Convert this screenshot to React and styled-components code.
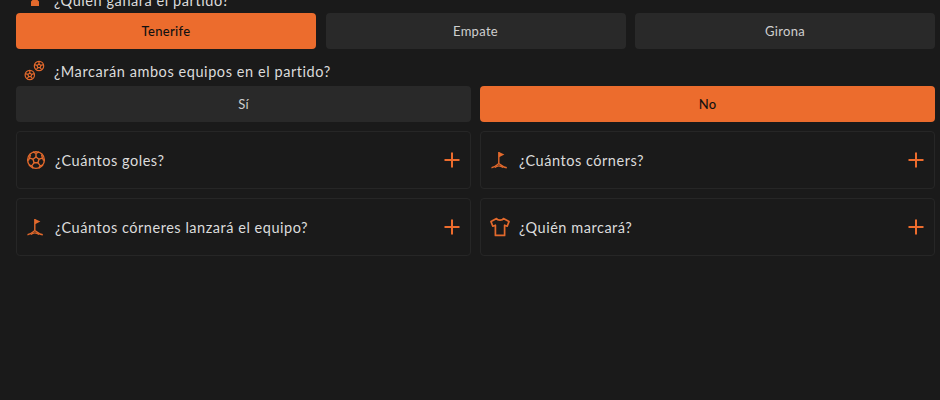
import React from 'react';
import styled, { createGlobalStyle } from 'styled-components';

const GlobalStyle = createGlobalStyle`
  html, body {
    margin: 0;
    padding: 0;
    height: 100%;
    background: #1a1a1a;
    overflow: hidden;
  }
  #root {
    height: 100%;
  }
`;

const Page = styled.div`
  height: 400px;
  overflow: hidden;
  padding: 0 5px 0 16px;
  box-sizing: border-box;
  background: #1a1a1a;
  font-family: 'Lato', 'Noto Sans', sans-serif;
`;

// the page is scrolled a little, the first question is cut by the top edge
const Content = styled.div`
  margin-top: -13px;
  display: flex;
  flex-direction: column;
`;

const Question = styled.div`
  display: flex;
  align-items: center;
  height: 26px;
  padding-left: 8px;
  gap: 8px;
  color: #dcdcdc;
  font-size: 14.5px;
  letter-spacing: 0.57px;
  margin-top: ${(p) => p.$mt || 0}px;
  margin-bottom: ${(p) => p.$mb || 0}px;
  svg {
    flex: none;
    width: 22px;
    height: 22px;
  }
`;

const Options = styled.div`
  display: grid;
  grid-template-columns: repeat(${(p) => p.$cols}, 1fr);
  gap: ${(p) => (p.$cols === 3 ? 9.5 : 9)}px;
  margin-bottom: ${(p) => p.$mb || 0}px;
`;

const Option = styled.div`
  height: 36px;
  display: flex;
  align-items: center;
  justify-content: center;
  border-radius: 4px;
  font-size: 13px;
  letter-spacing: 0.3px;
  background: ${(p) => (p.$active ? '#ec6c2d' : '#292929')};
  color: ${(p) => (p.$active ? '#111' : '#cfcfcf')};
  font-weight: ${(p) => (p.$active ? 500 : 400)};
`;

const Markets = styled.div`
  display: grid;
  grid-template-columns: 1fr 1fr;
  gap: 9px;
`;

const Card = styled.div`
  height: 58px;
  box-sizing: border-box;
  border: 1px solid #262626;
  border-radius: 4px;
  display: flex;
  align-items: center;
  padding: 0 10px 0 9px;
  gap: 9px;
  color: #dcdcdc;
  font-size: 14.5px;
  letter-spacing: 0.53px;
  svg.icon {
    flex: none;
    width: 20px;
    height: 20px;
  }
`;

const Label = styled.span`
  flex: 1;
`;

const Plus = styled.svg`
  flex: none;
  width: 16px;
  height: 16px;
`;

const orange = '#e2692c';

const Trophy = (props) => (
  <svg viewBox="0 0 22 22" fill={orange} {...props}>
    <path d="M10 6h2v3.5l3 3V17H7v-4.5l3-3z" />
  </svg>
);

const Ball = (props) => (
  <svg viewBox="0 0 20 20" fill="none" stroke={orange} strokeWidth="1.4" {...props}>
    <circle cx="10" cy="10" r="8.4" />
    <path d="M10 7l3 2.2-1.1 3.5H8.1L7 9.2z" />
    <path d="M10 7V3.4L7 1.9M10 3.4l3-1.5M13 9.2l3.5-1.2 1.2 2.6M16.5 8l-1-3.4M11.9 12.7l2.3 3.1 3-1M14.2 15.8l-1.4 2.2M8.1 12.7l-2.3 3.1-3-1M5.8 15.8l1.4 2.2M7 9.2L3.5 8l-1.2 2.6M3.5 8l1-3.4" />
  </svg>
);

const Balls = (props) => (
  <svg viewBox="0 0 22 22" fill="none" stroke={orange} strokeWidth="1.2" {...props}>
    <circle cx="5.8" cy="15" r="4.7" />
    <circle cx="15" cy="6" r="4.7" />
    <path d="M5.8 13l1.9 1.4-.7 2.2H4.6l-.7-2.2zM5.8 13v-2.5M7.7 14.4l2.6-.8M7 16.6l1.4 2M4.6 16.6l-1.4 2M3.9 14.4l-2.6-.8" />
    <path d="M15 4l1.9 1.4-.7 2.2h-2.4l-.7-2.2zM15 4V1.5M16.9 5.4l2.6-.8M16.2 7.6l1.4 2M13.8 7.6l-1.4 2M13.1 5.4l-2.6-.8" />
  </svg>
);

const Flag = (props) => (
  <svg viewBox="0 0 20 20" fill="none" stroke={orange} strokeWidth="1.4" {...props}>
    <path d="M8.8 13V2" />
    <path d="M9 2l5.4 2.6L9 7.2z" fill={orange} stroke="none" />
    <path d="M1.5 17.8c3.2-.5 5-2.6 7.3-4.3 2.6 1.7 4.4 3.8 8 4.3" />
    <path d="M4.8 17.6c1.3-1.2 2.6-1.8 4-1.8s2.8.6 4.4 1.8" strokeWidth="1.2" />
  </svg>
);

const Shirt = (props) => (
  <svg viewBox="0 0 20 20" fill="none" stroke={orange} strokeWidth="1.7" strokeLinejoin="round" {...props}>
    <path d="M6.6 1.6c.8 2 6 2 6.8 0l5.6 3-1.8 4.6-2.6-1v10.2H5.4V8.2l-2.6 1L1 4.6z" />
  </svg>
);

const PlusIcon = () => (
  <Plus viewBox="0 0 16 16" stroke="#ed6c2d" strokeWidth="2">
    <path d="M8 .5v15M.5 8h15" />
  </Plus>
);

const markets = [
  { label: '¿Cuántos goles?', Icon: Ball },
  { label: '¿Cuántos córners?', Icon: Flag },
  { label: '¿Cuántos córneres lanzará el equipo?', Icon: Flag },
  { label: '¿Quién marcará?', Icon: Shirt },
];

export default function App() {
  return (
    <Page>
      <GlobalStyle />
      <Content>
        <Question>
          <Trophy />
          ¿Quién ganará el partido?
        </Question>
        <Options $cols={3}>
          <Option $active>Tenerife</Option>
          <Option>Empate</Option>
          <Option>Girona</Option>
        </Options>
        <Question $mt={9} $mb={2}>
          <Balls />
          ¿Marcarán ambos equipos en el partido?
        </Question>
        <Options $cols={2} $mb={9}>
          <Option>Sí</Option>
          <Option $active>No</Option>
        </Options>
        <Markets>
          {markets.map(({ label, Icon }) => (
            <Card key={label}>
              <Icon className="icon" />
              <Label>{label}</Label>
              <PlusIcon />
            </Card>
          ))}
        </Markets>
      </Content>
    </Page>
  );
}
